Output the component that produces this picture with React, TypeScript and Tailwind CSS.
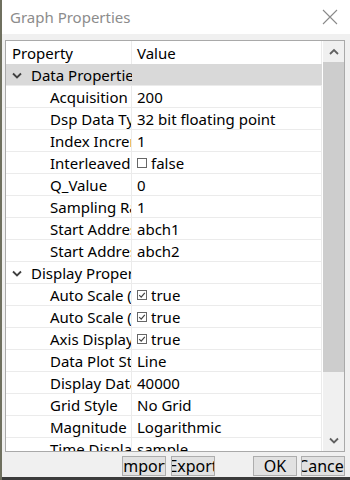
import React from "react";

type Row =
  | { kind: "group"; label: string; selected?: boolean }
  | { kind: "prop"; label: string; value: string; check?: "on" | "off" };

const rows: Row[] = [
  { kind: "group", label: "Data Properties", selected: true },
  { kind: "prop", label: "Acquisition", value: "200" },
  { kind: "prop", label: "Dsp Data Type", value: "32 bit floating point" },
  { kind: "prop", label: "Index Increment", value: "1" },
  { kind: "prop", label: "Interleaved", value: "false", check: "off" },
  { kind: "prop", label: "Q_Value", value: "0" },
  { kind: "prop", label: "Sampling Rate", value: "1" },
  { kind: "prop", label: "Start Address", value: "abch1" },
  { kind: "prop", label: "Start Address", value: "abch2" },
  { kind: "group", label: "Display Properties" },
  { kind: "prop", label: "Auto Scale (X)", value: "true", check: "on" },
  { kind: "prop", label: "Auto Scale (Y)", value: "true", check: "on" },
  { kind: "prop", label: "Axis Display", value: "true", check: "on" },
  { kind: "prop", label: "Data Plot Style", value: "Line" },
  { kind: "prop", label: "Display Data Size", value: "40000" },
  { kind: "prop", label: "Grid Style", value: "No Grid" },
  { kind: "prop", label: "Magnitude", value: "Logarithmic" },
  { kind: "prop", label: "Time Display", value: "sample" },
];

function CheckBox({ on }: { on: boolean }) {
  return (
    <svg width="10" height="10" viewBox="0 0 10 10" className="mr-[4px] shrink-0">
      <rect x="0.5" y="0.5" width="9" height="9" fill="white" stroke="#666" />
      {on && <path d="M2.2 5.2 L4.2 7.2 L7.8 2.8" fill="none" stroke="#444" strokeWidth="1.2" />}
    </svg>
  );
}

function Chevron({ up }: { up?: boolean }) {
  return (
    <svg width="10" height="7" viewBox="0 0 10 7">
      <path
        d={up ? "M1 6 L5 2 L9 6" : "M1 1.5 L5 5.5 L9 1.5"}
        fill="none"
        stroke={up ? "#606060" : "#404040"}
        strokeWidth="1.8"
      />
    </svg>
  );
}

function Btn({ label, className }: { label: string; className?: string }) {
  return (
    <div
      className={`flex h-[20px] w-[44px] items-center justify-center overflow-hidden whitespace-nowrap border border-[#adadad] bg-[#e1e1e1] text-[16px] leading-none text-black ${className ?? ""}`}
    >
      {label}
    </div>
  );
}

export default function App() {
  return (
    <div className="flex h-[480px] w-[350px] flex-col overflow-hidden border-l-2 border-[#6f705f] bg-[#f0f0f0] font-['Noto_Sans',sans-serif]">
      {/* Title bar */}
      <div className="flex h-[34px] shrink-0 items-center justify-between bg-white pl-[8px] pr-[12px]">
        <span className="text-[15px] text-[#8c8c8c]">Graph Properties</span>
        <svg width="16" height="16" viewBox="0 0 16 16">
          <path d="M1 1 L15 15 M15 1 L1 15" stroke="#8a8a8a" strokeWidth="1.1" />
        </svg>
      </div>

      {/* Property grid */}
      <div className="ml-[3px] mt-[6px] flex h-[412px] w-[340px] shrink-0 overflow-hidden border border-[#a9a9a9] bg-white">
        <div className="flex w-[316px] flex-col overflow-hidden text-[15px] leading-none text-black">
          <div className="flex h-[23px] shrink-0">
            <div className="flex w-[126px] items-center border-r border-[#ebebeb] pl-[6px] pt-[1px]">Property</div>
            <div className="flex flex-1 items-center border-r border-[#ebebeb] pl-[5px] pt-[1px]">Value</div>
          </div>
          {rows.map((r, i) =>
            r.kind === "group" ? (
              <div
                key={i}
                className={`flex h-[22px] shrink-0 border-b border-[#ebebeb] ${r.selected ? "bg-[#d9d9d9]" : ""}`}
              >
                <div
                  className={`flex w-[126px] items-center overflow-hidden whitespace-nowrap pl-[6px] pt-[1px] ${r.selected ? "" : "border-r border-[#ebebeb]"}`}
                >
                  <span className="mr-[9px] flex w-[10px]">
                    <Chevron />
                  </span>
                  {r.label}
                </div>
                <div className={`flex-1 ${r.selected ? "" : "border-r border-[#ebebeb]"}`} />
              </div>
            ) : (
              <div key={i} className="flex h-[22px] shrink-0 border-b border-[#ebebeb]">
                <div className="flex w-[126px] items-center overflow-hidden whitespace-nowrap border-r border-[#ebebeb] pl-[44px] pt-[1px]">
                  {r.label}
                </div>
                <div className="flex flex-1 items-center overflow-hidden whitespace-nowrap border-r border-[#ebebeb] pl-[5px] pt-[1px]">
                  {r.check && <CheckBox on={r.check === "on"} />}
                  {r.value}
                </div>
              </div>
            )
          )}
        </div>
        {/* Scrollbar */}
        <div className="ml-[1px] flex w-[21px] flex-col bg-[#f0f0f0]">
          <div className="flex h-[21px] shrink-0 items-center justify-center">
            <Chevron up />
          </div>
          <div className="h-[310px] shrink-0 bg-[#cdcdcd]" />
          <div className="flex-1" />
          <div className="flex h-[21px] shrink-0 items-center justify-center">
            <svg width="10" height="7" viewBox="0 0 10 7">
              <path d="M1 1.5 L5 5.5 L9 1.5" fill="none" stroke="#606060" strokeWidth="1.8" />
            </svg>
          </div>
        </div>
      </div>

      {/* Buttons */}
      <div className="mt-[4px] flex h-[20px] shrink-0 items-center">
        <Btn label="Import" className="ml-[120px]" />
        <Btn label="Export" className="ml-[5px]" />
        <Btn label="OK" className="ml-[38px]" />
        <Btn label="Cancel" className="ml-[4px]" />
      </div>
      <div className="flex-1" />
      <div className="h-[3px] shrink-0 bg-[#3c3c3c]" />
    </div>
  );
}
